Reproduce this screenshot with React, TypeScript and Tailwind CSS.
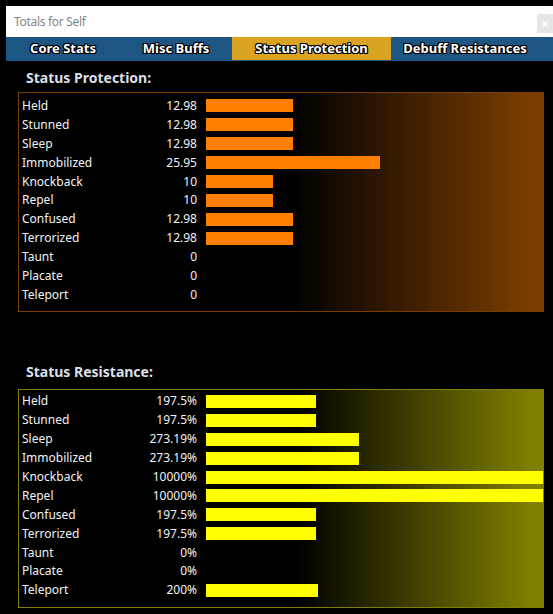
import React from "react";

type Row = { label: string; value: string; width: number };

const protection: Row[] = [
  { label: "Held", value: "12.98", width: 87 },
  { label: "Stunned", value: "12.98", width: 87 },
  { label: "Sleep", value: "12.98", width: 87 },
  { label: "Immobilized", value: "25.95", width: 174 },
  { label: "Knockback", value: "10", width: 67 },
  { label: "Repel", value: "10", width: 67 },
  { label: "Confused", value: "12.98", width: 87 },
  { label: "Terrorized", value: "12.98", width: 87 },
  { label: "Taunt", value: "0", width: 0 },
  { label: "Placate", value: "0", width: 0 },
  { label: "Teleport", value: "0", width: 0 },
];

const resistance: Row[] = [
  { label: "Held", value: "197.5%", width: 110 },
  { label: "Stunned", value: "197.5%", width: 110 },
  { label: "Sleep", value: "273.19%", width: 153 },
  { label: "Immobilized", value: "273.19%", width: 153 },
  { label: "Knockback", value: "10000%", width: 400 },
  { label: "Repel", value: "10000%", width: 400 },
  { label: "Confused", value: "197.5%", width: 110 },
  { label: "Terrorized", value: "197.5%", width: 110 },
  { label: "Taunt", value: "0%", width: 0 },
  { label: "Placate", value: "0%", width: 0 },
  { label: "Teleport", value: "200%", width: 112 },
];

const tabShadow =
  "[text-shadow:-1px_-1px_0_#000,1px_-1px_0_#000,-1px_1px_0_#000,1px_1px_0_#000,0_1px_0_#000,0_-1px_0_#000,1px_0_0_#000,-1px_0_0_#000]";

function Rows({ rows, barClass }: { rows: Row[]; barClass: string }) {
  return (
    <div className="flex flex-col">
      {rows.map((r, i) => (
        <div key={i} className="h-[18.9px] flex items-center">
          <div className="w-[75px] shrink-0 pl-[3px] text-[12px] text-[#f2f2f2] whitespace-nowrap leading-none">
            {r.label}
          </div>
          <div className="w-[103px] shrink-0 text-right text-[12px] text-[#f2f2f2] leading-none whitespace-nowrap">
            {r.value}
          </div>
          <div className="ml-[9px] flex-1 min-w-0 overflow-hidden h-[13px] flex">
            {r.width > 0 && (
              <div className={`h-[13px] shrink-0 ${barClass}`} style={{ width: r.width }} />
            )}
          </div>
        </div>
      ))}
    </div>
  );
}

export default function App() {
  return (
    <div
      className="w-[553px] h-[614px] bg-black overflow-hidden pt-[6px] pl-[6px]"
      style={{ fontFamily: '"Noto Sans", "DejaVu Sans", sans-serif' }}
    >
      <div className="h-[31px] bg-white relative flex items-center">
        <span className="pl-[8px] text-[12px] text-[#858585] tracking-[-0.3px]">Totals for Self</span>
        <div className="absolute right-0 top-[8px] w-[16px] h-[19px] bg-[#e6e6e6] flex items-center justify-center text-[11px] text-white font-bold">
          x
        </div>
      </div>
      <div className="h-[24px] bg-[#1e5683] flex text-white font-bold text-[13px]">
        <div className={`w-[114px] flex items-center justify-center ${tabShadow}`}>Core Stats</div>
        <div className={`w-[112px] flex items-center justify-center ${tabShadow}`}>Misc Buffs</div>
        <div className={`w-[159px] flex items-center justify-center bg-[#daa422] h-[23px] ${tabShadow}`}>
          Status Protection
        </div>
        <div className={`flex-1 flex items-center justify-center pr-[14px] ${tabShadow}`}>Debuff Resistances</div>
      </div>

      <div className="pl-[12px]">
        <div className="pl-[8px] pt-[7px] h-[31px] text-[14px] font-bold text-[#dadfe8] leading-[20px]">
          Status Protection:
        </div>
        <div className="w-[526px] h-[220px] border border-[#7a3d00] overflow-hidden pt-[3.5px] bg-[linear-gradient(to_right,#000_52%,#7a3d00_97%)]">
          <Rows rows={protection} barClass="bg-[#ff8000]" />
        </div>

        <div className="pl-[8px] pt-[50px] h-[77px] text-[14px] font-bold text-[#dadfe8] leading-[20px]">
          Status Resistance:
        </div>
        <div className="w-[526px] h-[219px] border border-[#808000] overflow-hidden pt-[2px] bg-[linear-gradient(to_right,#000_53%,#808000_98%)]">
          <Rows rows={resistance} barClass="bg-[#ffff00]" />
        </div>
      </div>
    </div>
  );
}
